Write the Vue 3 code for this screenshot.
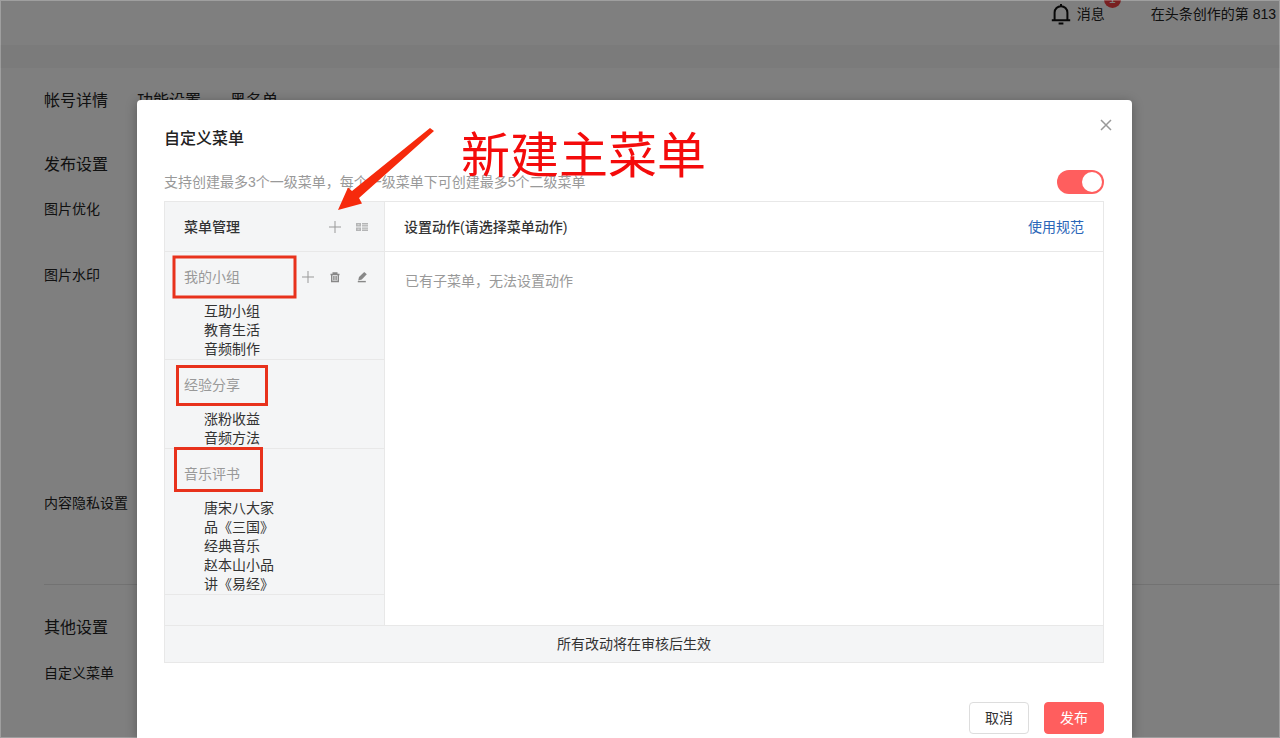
<script setup>
import { ref } from 'vue'

const enabled = ref(true)

const groups = [
  { name: '我的小组', tools: true, items: ['互助小组', '教育生活', '音频制作'] },
  { name: '经验分享', tools: false, items: ['涨粉收益', '音频方法'] },
  { name: '音乐评书', tools: false, items: ['唐宋八大家', '品《三国》', '经典音乐', '赵本山小品', '讲《易经》'] }
]
</script>

<template>
  <div class="page">
    <header class="topbar">
      <a class="message" href="#">
        <svg class="bell" viewBox="0 0 20 22" width="20" height="22" aria-hidden="true">
          <path d="M3.6 16V8.600a6.400 6.400 0 0 1 12.800 0V16M0.800 16.200h18.400M10 0v2.200M7.600 19.400h4.800" />
        </svg>
        <span>消息</span>
        <span class="badge">1</span>
      </a>
      <span class="days">在头条创作的第 813</span>
    </header>
    <main class="settings">
      <nav class="tabs">
        <a href="#">帐号详情</a>
        <a href="#">功能设置</a>
        <a href="#">黑名单</a>
      </nav>
      <section class="publish">
        <h2>发布设置</h2>
        <p class="row-optimize">图片优化</p>
        <p class="row-watermark">图片水印</p>
        <p class="row-privacy">内容隐私设置</p>
      </section>
      <section class="other">
        <h2>其他设置</h2>
        <p>自定义菜单</p>
      </section>
    </main>

    <div class="mask">
      <div class="dialog" role="dialog" aria-labelledby="dialog-title">
        <div class="title-row">
          <h1 id="dialog-title">自定义菜单</h1>
          <button class="close" type="button" aria-label="关闭">
            <svg viewBox="0 0 12 12" width="12" height="12"><path d="M1 1l10 10M11 1L1 11" /></svg>
          </button>
        </div>
        <div class="intro">
          <p>支持创建最多3个一级菜单，每个一级菜单下可创建最多5个二级菜单</p>
          <input v-model="enabled" class="switch" type="checkbox" role="switch" aria-labelledby="dialog-title" />
        </div>

        <div class="board">
          <aside class="side">
            <div class="side-head">
              <strong>菜单管理</strong>
              <span class="tools">
                <button type="button" aria-label="新建主菜单">
                  <svg viewBox="0 0 12 12" width="12" height="12"><path class="line" d="M6 0v12M0 6h12" /></svg>
                </button>
                <button type="button" aria-label="排序">
                  <svg viewBox="0 0 12 12" width="12" height="12">
                    <path class="block" d="M0 2h5v3.500H0zM0 6.500h5V10H0zM6 2h6v3.500H6zM6 6.500h6V10H6z" />
                    <path class="slit" d="M1.500 3.700h2M1.500 8.200h2M6 3.700h6M6 8.200h6" />
                  </svg>
                </button>
              </span>
            </div>
            <section v-for="group in groups" :key="group.name" class="group">
              <div class="group-head">
                <span>{{ group.name }}</span>
                <span v-if="group.tools" class="tools">
                  <button type="button" aria-label="添加子菜单">
                    <svg viewBox="0 0 12 12" width="12" height="12"><path class="line" d="M6 0v12M0 6h12" /></svg>
                  </button>
                  <button type="button" aria-label="删除">
                    <svg viewBox="0 0 12 12" width="12" height="12">
                      <path class="mark" d="M1.500 3.500h9M4.200 3.500V2h3.600v1.500M2.700 3.500v7h6.600v-7M4.900 5v4.200M7.100 5v4.200" />
                    </svg>
                  </button>
                  <button type="button" aria-label="编辑">
                    <svg viewBox="0 0 12 12" width="12" height="12">
                      <path class="solid" d="M8.200 1l2.600 2.200-5 5.400-3.600 1 .8-3.600z" />
                      <path class="mark" d="M1.800 10.600h8" />
                    </svg>
                  </button>
                </span>
              </div>
              <ul>
                <li v-for="item in group.items" :key="item">{{ item }}</li>
              </ul>
            </section>
          </aside>
          <section class="content">
            <div class="content-head">
              <strong>设置动作(请选择菜单动作)</strong>
              <a href="#">使用规范</a>
            </div>
            <p class="empty">已有子菜单，无法设置动作</p>
          </section>
          <p class="notice">所有改动将在审核后生效</p>
        </div>

        <div class="actions">
          <button class="btn" type="button">取消</button>
          <button class="btn primary" type="button">发布</button>
        </div>

        <svg class="marks" viewBox="0 0 320 400" width="320" height="400" aria-hidden="true">
          <rect x="37" y="157" width="121" height="40" />
          <rect x="40.500" y="266.500" width="89" height="38" />
          <rect x="38.500" y="348.500" width="86" height="42" />
          <path d="M201 110L211 87.500L215 91L293 28L297 31L222 98L225 103.500Z" />
        </svg>
        <span class="callout">新建主菜单</span>
      </div>
    </div>
  </div>
</template>

<style>
body {
  margin: 0;
}
</style>

<style scoped>
.page {
  position: relative;
  box-sizing: border-box;
  min-height: 100vh;
  overflow: hidden;
  background: #fff;
  color: #222;
  font: 14px/20px "Liberation Sans", "Noto Sans CJK SC", sans-serif;
}
h1, h2, p, ul {
  margin: 0;
  padding: 0;
  font-weight: 400;
}
a {
  color: inherit;
  text-decoration: none;
}
button {
  padding: 0;
  border: 0;
  background: none;
  font: inherit;
  color: inherit;
}
svg path {
  fill: none;
}
.topbar {
  display: flex;
  justify-content: flex-end;
  gap: 46px;
  box-sizing: border-box;
  height: 45px;
  padding: 4px 4px 0 0;
}
.message {
  position: relative;
  display: flex;
  gap: 6px;
  height: 20px;
}
.bell path {
  stroke: #111;
  stroke-width: 2;
}
.badge {
  position: absolute;
  top: -13px;
  right: -16px;
  width: 17px;
  height: 17px;
  border-radius: 50%;
  background: #f04142;
  color: #fff;
  font-size: 12px;
  line-height: 17px;
  text-align: center;
}
.settings {
  padding: 23px 0 0 44px;
  border-top: 23px solid #f6f6f6;
}
.tabs {
  display: flex;
  gap: 29px;
  font-size: 16px;
}
h2 {
  font-size: 16px;
}
.publish {
  padding: 44px 0 71px;
  border-bottom: 1px solid #e4e4e4;
}
.row-optimize {
  padding-top: 24px;
}
.row-watermark {
  padding-top: 46px;
}
.row-privacy {
  padding-top: 208px;
}
.other {
  padding-top: 33px;
}
.other p {
  padding-top: 25px;
}
.mask {
  position: absolute;
  inset: 0;
  box-sizing: border-box;
  padding: 100px 148px 0 137px;
  background: rgba(0, 0, 0, 0.5);
  box-shadow: inset 0 0 0 1px rgba(255, 255, 255, 0.25);
}
.dialog {
  position: relative;
  box-sizing: border-box;
  min-height: 100%;
  padding: 26px 28px 4px 27px;
  border-radius: 4px 4px 0 0;
  background: #fff;
  color: #333;
  box-shadow: 0 2px 12px rgba(0, 0, 0, 0.3);
}
.title-row {
  display: flex;
  justify-content: space-between;
  height: 26px;
}
h1 {
  color: #222;
  font-size: 16px;
  line-height: 26px;
  font-weight: 500;
}
.close {
  width: 12px;
  height: 12px;
  margin: -7px -8px 0 0;
}
.close path {
  stroke: #999;
  stroke-width: 1.500;
}
.close svg,
.tools svg {
  display: block;
}
.intro {
  display: flex;
  align-items: center;
  justify-content: space-between;
  height: 24px;
  margin-top: 18px;
  color: #999;
}
.switch {
  appearance: none;
  width: 47px;
  height: 24px;
  margin: 0;
  border-radius: 12px;
  background: #ccc;
}
.switch::before {
  content: "";
  display: block;
  width: 20px;
  height: 20px;
  margin: 2px;
  border-radius: 50%;
  background: #fff;
}
.switch:checked {
  background: #ff5e5e;
}
.switch:checked::before {
  margin-left: 25px;
}
.board {
  display: grid;
  grid-template-columns: 220px 1fr;
  margin-top: 7px;
  border: 1px solid #e8e8e8;
}
.side {
  padding-bottom: 30px;
  border-right: 1px solid #e8e8e8;
  background: #f4f5f6;
}
.side-head,
.content-head {
  display: flex;
  align-items: center;
  justify-content: space-between;
  height: 49px;
  padding: 0 16px 0 19px;
  border-bottom: 1px solid #e8e8e8;
}
.content-head {
  padding: 0 19px;
}
strong {
  font-weight: 500;
}
.content-head a {
  color: #2a66b8;
}
.tools {
  display: flex;
  gap: 15px;
}
.tools .line {
  stroke: #999;
}
.tools .block {
  fill: #b4b5b6;
}
.tools .slit {
  stroke: #dcdddd;
}
.tools .mark {
  stroke: #888;
  stroke-width: 1.400;
}
.tools .solid {
  fill: #888;
}
.group {
  border-bottom: 1px solid #e8e8e8;
}
.group-head {
  display: flex;
  align-items: center;
  justify-content: space-between;
  height: 50px;
  padding: 0 16px 0 19px;
  color: #999;
}
.group ul {
  padding-left: 39px;
  list-style: none;
  line-height: 19px;
}
.empty {
  padding: 19px 20px;
  color: #999;
}
.notice {
  grid-column: 1 / -1;
  border-top: 1px solid #e8e8e8;
  background: #f4f5f6;
  line-height: 36px;
  text-align: center;
}
.actions {
  display: flex;
  justify-content: flex-end;
  gap: 15px;
  margin-top: 39px;
}
.btn {
  box-sizing: border-box;
  width: 60px;
  height: 32px;
  border: 1px solid #ddd;
  border-radius: 4px;
  background: #fff;
}
.primary {
  border-color: #ff5e5e;
  background: #ff5e5e;
  color: #fff;
}
.marks {
  position: absolute;
  top: 0;
  left: 0;
  pointer-events: none;
}
.marks rect {
  fill: none;
  stroke: #e8321c;
  stroke-width: 3;
}
.marks path {
  fill: #f62a0c;
}
.callout {
  position: absolute;
  top: 26px;
  left: 324px;
  color: #f40b0b;
  font-size: 49px;
  line-height: 60px;
  pointer-events: none;
}
</style>
